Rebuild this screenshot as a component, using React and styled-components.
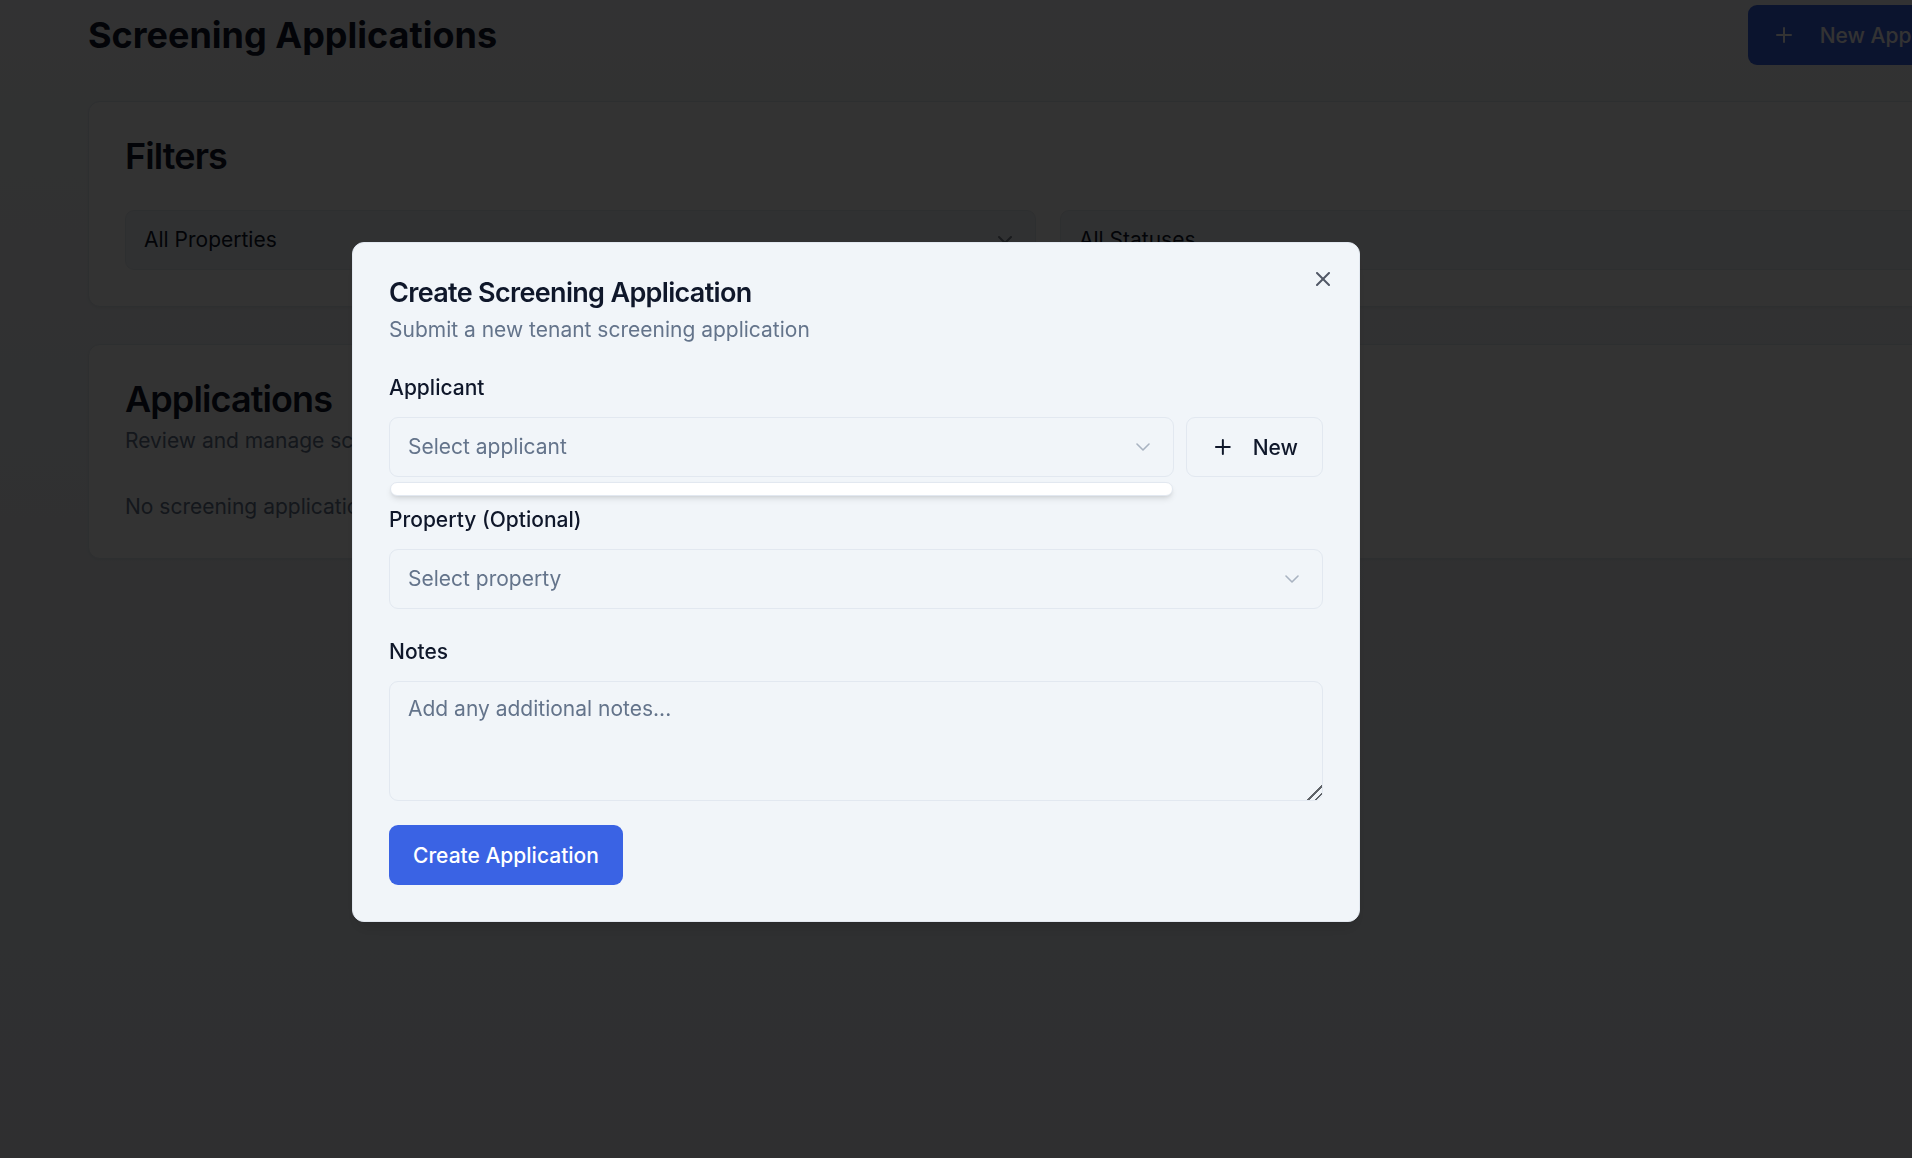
import styled, { createGlobalStyle } from "styled-components";
import { Plus, ChevronDown, X } from "lucide-react";

const GlobalStyle = createGlobalStyle`
  html, body {
    margin: 0;
    padding: 0;
  }
  body {
    width: 1912px;
    height: 1158px;
    overflow: hidden;
    font-family: Inter, "Noto Sans", sans-serif;
    color: #0f172a;
    background: linear-gradient(to bottom, #f8fafc 0%, #eef1f6 45%, #e8ebf1 100%);
  }
  * {
    box-sizing: border-box;
  }
`;

const Page = styled.main`
  width: 2008px;
  padding: 5px 0 0 88px;
`;

const Header = styled.header`
  display: flex;
  align-items: center;
  justify-content: space-between;
  height: 60px;
  margin-bottom: 36px;
`;

const PageTitle = styled.h1`
  margin: 0;
  font-size: 36px;
  font-weight: 700;
  line-height: 60px;
  color: #0f172a;
`;

const PrimaryButton = styled.button`
  display: inline-flex;
  align-items: center;
  gap: ${(props) => props.gap || 12}px;
  height: 60px;
  padding: 0 24px;
  border: none;
  border-radius: 9px;
  background: #3a63e4;
  color: #ffffff;
  font-family: inherit;
  font-size: 21px;
  font-weight: 500;
  white-space: nowrap;
  flex-shrink: 0;
`;

const Card = styled.section`
  background: #ffffff;
  border: 1px solid #e2e8f0;
  border-radius: 12px;
  box-shadow: 0 1px 3px rgba(0, 0, 0, 0.05);
  margin-bottom: ${(props) => props.gapAfter || 0}px;
`;

const CardHeader = styled.div`
  display: flex;
  flex-direction: column;
  gap: 9px;
  padding: 36px;
`;

const CardTitle = styled.h2`
  margin: 0;
  font-size: 36px;
  font-weight: 600;
  line-height: 1;
  letter-spacing: -0.9px;
  color: #0f172a;
`;

const CardDescription = styled.p`
  margin: 0;
  font-size: 21px;
  line-height: 30px;
  color: #64748b;
`;

const CardContent = styled.div`
  padding: 0 36px 36px;
`;

const FilterGrid = styled.div`
  display: grid;
  grid-template-columns: 1fr 1fr;
  gap: 24px;
`;

const SelectBox = styled.div`
  position: relative;
  display: flex;
  align-items: center;
  justify-content: space-between;
  flex: ${(props) => (props.grow ? "1 1 auto" : "none")};
  height: 60px;
  padding: 0 18px;
  border: 1px solid #e2e8f0;
  border-radius: 9px;
  background: ${(props) => (props.filled ? "#f1f5f9" : "transparent")};
  font-size: 21px;
  line-height: 30px;
  color: ${(props) => (props.muted ? "#64748b" : "#0f172a")};

  svg {
    opacity: 0.5;
    color: ${(props) => (props.muted ? "#64748b" : "#0f172a")};
  }
`;

const EmptyText = styled.p`
  margin: 0;
  font-size: 21px;
  line-height: 30px;
  color: #64748b;
`;

const Overlay = styled.div`
  position: fixed;
  inset: 0;
  background: rgba(0, 0, 0, 0.8);
`;

const Dialog = styled.div`
  position: fixed;
  left: 352px;
  top: 242px;
  width: 1008px;
  padding: 36px;
  background: #f1f5f9;
  border: 1px solid #e2e8f0;
  border-radius: 12px;
  box-shadow: 0 10px 15px -3px rgba(0, 0, 0, 0.1), 0 4px 6px -4px rgba(0, 0, 0, 0.1);
  display: flex;
  flex-direction: column;
`;

const CloseButton = styled.button`
  position: absolute;
  top: 24px;
  right: 24px;
  width: 24px;
  height: 24px;
  padding: 0;
  border: none;
  background: none;
  color: #0f172a;
  opacity: 0.7;
  display: flex;
`;

const DialogTitle = styled.h2`
  margin: 0;
  font-size: 27px;
  font-weight: 600;
  line-height: 27px;
  letter-spacing: -0.675px;
  color: #0f172a;
`;

const DialogDescription = styled.p`
  margin: 9px 0 0;
  font-size: 21px;
  line-height: 30px;
  color: #64748b;
`;

const Form = styled.form`
  display: flex;
  flex-direction: column;
  gap: 32px;
  margin-top: 32px;
`;

const Field = styled.div`
  display: flex;
  flex-direction: column;
  gap: 19px;
`;

const Label = styled.label`
  font-size: 21px;
  font-weight: 500;
  line-height: 21px;
  color: #0f172a;
`;

const Row = styled.div`
  display: flex;
  gap: 12px;
`;

const OutlineButton = styled.button`
  display: inline-flex;
  align-items: center;
  gap: 18px;
  flex: none;
  width: 137px;
  height: 60px;
  padding: 0 24px;
  border: 1px solid #e2e8f0;
  border-radius: 9px;
  background: #f1f5f9;
  color: #0f172a;
  font-family: inherit;
  font-size: 21px;
  font-weight: 500;
`;

const Popover = styled.div`
  position: absolute;
  left: 0;
  right: 0;
  top: calc(100% + 6px);
  height: 14px;
  background: #ffffff;
  border: 1px solid #e2e8f0;
  border-radius: 9px;
  box-shadow: 0 4px 6px -1px rgba(0, 0, 0, 0.1), 0 2px 4px -2px rgba(0, 0, 0, 0.1);
`;

const NotesArea = styled.textarea`
  display: block;
  width: 100%;
  height: 120px;
  padding: 12px 18px;
  border: 1px solid #e2e8f0;
  border-radius: 9px;
  background: transparent;
  font-family: inherit;
  font-size: 21px;
  line-height: 30px;
  color: #0f172a;
  resize: vertical;
  outline: none;

  &::placeholder {
    color: #64748b;
  }

  &::-webkit-scrollbar {
    width: 18px;
    height: 18px;
  }

  &::-webkit-resizer {
    background: linear-gradient(
      135deg,
      transparent 0 50%,
      #5f6368 50% 57%,
      transparent 57% 74%,
      #5f6368 74% 81%,
      transparent 81%
    );
  }
`;

const SubmitRow = styled.div`
  margin-top: -8px;
`;

export default function App() {
  return (
    <>
      <GlobalStyle />
      <Page>
        <Header>
          <PageTitle>Screening Applications</PageTitle>
          <PrimaryButton gap={24}>
            <Plus size={24} strokeWidth={2} />
            New Application
          </PrimaryButton>
        </Header>

        <Card gapAfter={37}>
          <CardHeader>
            <CardTitle>Filters</CardTitle>
          </CardHeader>
          <CardContent>
            <FilterGrid>
              <SelectBox filled>
                All Properties
                <ChevronDown size={24} strokeWidth={2} />
              </SelectBox>
              <SelectBox filled>
                All Statuses
                <ChevronDown size={24} strokeWidth={2} />
              </SelectBox>
            </FilterGrid>
          </CardContent>
        </Card>

        <Card>
          <CardHeader>
            <CardTitle>Applications</CardTitle>
            <CardDescription>Review and manage screening applications</CardDescription>
          </CardHeader>
          <CardContent>
            <EmptyText>No screening applications found.</EmptyText>
          </CardContent>
        </Card>
      </Page>

      <Overlay />

      <Dialog role="dialog">
        <CloseButton aria-label="Close">
          <X size={24} strokeWidth={2} />
        </CloseButton>
        <DialogTitle>Create Screening Application</DialogTitle>
        <DialogDescription>Submit a new tenant screening application</DialogDescription>

        <Form onSubmit={(e) => e.preventDefault()}>
          <Field>
            <Label>Applicant</Label>
            <Row>
              <SelectBox grow muted>
                Select applicant
                <ChevronDown size={24} strokeWidth={1.6} />
                <Popover />
              </SelectBox>
              <OutlineButton type="button">
                <Plus size={24} strokeWidth={2} />
                New
              </OutlineButton>
            </Row>
          </Field>

          <Field>
            <Label>Property (Optional)</Label>
            <SelectBox muted>
              Select property
              <ChevronDown size={24} strokeWidth={1.6} />
            </SelectBox>
          </Field>

          <Field>
            <Label>Notes</Label>
            <NotesArea placeholder="Add any additional notes..." />
          </Field>

          <SubmitRow>
            <PrimaryButton type="submit">Create Application</PrimaryButton>
          </SubmitRow>
        </Form>
      </Dialog>
    </>
  );
}
